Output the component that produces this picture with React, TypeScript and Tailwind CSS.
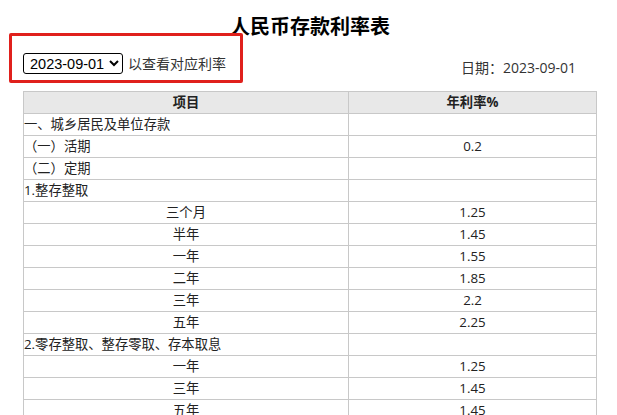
import { useState } from "react";

interface Row {
  label: string;
  rate: string;
  center?: boolean;
}

const rows: Row[] = [
  { label: "一、城乡居民及单位存款", rate: "" },
  { label: "（一）活期", rate: "0.2" },
  { label: "（二）定期", rate: "" },
  { label: "1.整存整取", rate: "" },
  { label: "三个月", rate: "1.25", center: true },
  { label: "半年", rate: "1.45", center: true },
  { label: "一年", rate: "1.55", center: true },
  { label: "二年", rate: "1.85", center: true },
  { label: "三年", rate: "2.2", center: true },
  { label: "五年", rate: "2.25", center: true },
  { label: "2.零存整取、整存零取、存本取息", rate: "" },
  { label: "一年", rate: "1.25", center: true },
  { label: "三年", rate: "1.45", center: true },
  { label: "五年", rate: "1.45", center: true },
];

export default function App() {
  const [date, setDate] = useState("2023-09-01");

  return (
    <div
      className="relative w-[617px] h-[415px] overflow-hidden bg-white text-[#222]"
      style={{ fontFamily: '"Open Sans", "Noto Sans CJK SC", sans-serif' }}
    >
      <h1 className="pt-[14px] pl-[3px] text-center text-[20px] leading-[26px] font-bold text-black">
        人民币存款利率表
      </h1>

      <div className="flex items-end justify-between pl-[23px] pr-[41px] mt-[2px] h-[40px]">
        <div className="flex items-center gap-[5px] mb-[8px]">
          <select
            value={date}
            onChange={(e) => setDate(e.target.value)}
            className="h-[21px] w-[100px] border border-black rounded-[3px] pl-[2px] text-[14.5px] leading-[19px] text-black bg-white"
            style={{ fontFamily: '"Liberation Sans", Arial, sans-serif' }}
          >
            <option value="2023-09-01">2023-09-01</option>
            <option value="2023-06-08">2023-06-08</option>
            <option value="2022-09-15">2022-09-15</option>
          </select>
          <span className="text-[14px] leading-[20px] text-[#333]">以查看对应利率</span>
        </div>
        <div className="text-[14px] leading-[20px] text-[#333] mb-[4px]">日期：{date}</div>
      </div>

      <table className="ml-[23px] mt-[9px] w-[574px] border-collapse border border-[#c8c8c8] text-[13.3px] text-[#222]">
        <thead>
          <tr className="h-[22px] bg-[#e8e8e8]">
            <th className="w-[325px] border border-[#c8c8c8] font-bold p-0 leading-[21px]">项目</th>
            <th className="border border-[#c8c8c8] font-bold p-0 leading-[21px]">年利率%</th>
          </tr>
        </thead>
        <tbody>
          {rows.map((r, i) => (
            <tr key={i} className="h-[22px]">
              <td
                className={
                  r.center
                    ? "border border-[#c8c8c8] p-0 leading-[21px] text-center"
                    : "border border-[#c8c8c8] p-0 leading-[21px] text-left"
                }
              >
                {r.label}
              </td>
              <td className="border border-[#c8c8c8] p-0 leading-[21px] text-center">{r.rate}</td>
            </tr>
          ))}
        </tbody>
      </table>

      {/* highlight box drawn over the date picker */}
      <div className="absolute left-[9px] top-[33px] w-[234px] h-[50px] border-[3px] border-[#e0201c] rounded-[2px] pointer-events-none" />
    </div>
  );
}
